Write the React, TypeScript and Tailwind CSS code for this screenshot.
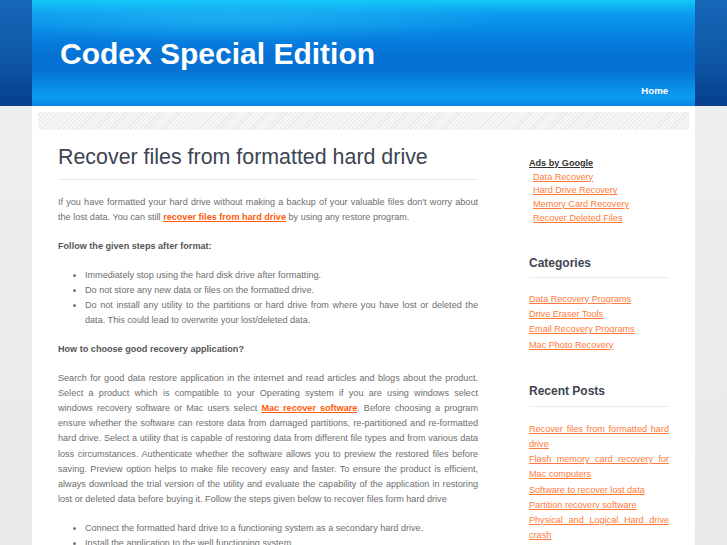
import React from "react";

const sideLink = "text-[#ff7a3a] underline decoration-[#ff7a3a]";
const jl = "block whitespace-nowrap [text-align-last:justify]";
const ll = "block whitespace-nowrap";
const bodyLink = "font-bold text-[#ff5a0a] underline";

export default function App() {
  return (
    <div className="min-h-[545px] w-full bg-[linear-gradient(180deg,#1767b8_0px,#0e56a7_60px,#063f8d_106px,#eeeeee_106px,#e9e9e9_545px)] font-['Liberation_Sans',Arial,sans-serif]">
      <div className="mx-auto w-[663px] bg-white">
        {/* Header */}
        <div className="relative flex h-[106px] flex-col bg-[linear-gradient(180deg,#14c8f7_0px,#0b9bee_14px,#0784e2_34px,#0672d4_55px,#0672d3_70px,#0a8ae6_86px,#0b9cf0_98px,#0a84e2_106px)]">
          <div className="pointer-events-none absolute inset-0 bg-[radial-gradient(ellipse_60%_30%_at_30%_18%,rgba(60,220,255,0.35),rgba(60,220,255,0)_70%)]" />
          <h1 className="relative pl-[28px] pt-[39px] text-[30px] font-bold leading-[30px] text-white">
            Codex Special Edition
          </h1>
          <div className="relative mt-auto flex justify-end pb-[9px] pr-[27px]">
            <span className="text-[9.6px] font-bold leading-[12px] text-white">Home</span>
          </div>
        </div>

        {/* Body */}
        <div className="px-[6px] pt-[6px]">
          <div className="h-[18px] bg-[repeating-linear-gradient(135deg,#f7f7f7_0px,#f7f7f7_2px,#e9e9e9_2px,#e9e9e9_3px)]" />
        </div>
        <div className="flex px-[26px] text-[9.1px] leading-[15.2px] text-[#6e6e6e]">
          {/* Main */}
          <div className="w-[420px] pt-[13px]">
            <h2 className="border-b border-[#ececec] pb-[8px] text-[21.4px] leading-[28px] text-[#3c4452]">
              Recover files from formatted hard drive
            </h2>
            <div className="pt-[15px]">
              <p className="mb-[13.5px]">
                <span className={jl}>If you have formatted your hard drive without making a backup of your valuable files don't worry about</span>
                <span className={ll}>
                  the lost data. You can still <a className={bodyLink}>recover files from hard drive</a> by using any restore program.
                </span>
              </p>
              <p className="mb-[13.5px] font-bold text-[#555]">Follow the given steps after format:</p>
              <ul className="mb-[13.5px] list-disc pl-[27px] marker:text-[#777]">
                <li>Immediately stop using the hard disk drive after formatting.</li>
                <li>Do not store any new data or files on the formatted drive.</li>
                <li>
                  <span className={jl}>Do not install any utility to the partitions or hard drive from where you have lost or deleted the</span>
                  <span className={ll}>data. This could lead to overwrite your lost/deleted data.</span>
                </li>
              </ul>
              <p className="mb-[13.5px] font-bold text-[#555]">How to choose good recovery application?</p>
              <p className="mb-[13.5px]">
                <span className={jl}>Search for good data restore application in the internet and read articles and blogs about the product.</span>
                <span className={jl}>Select a product which is compatible to your Operating system if you are using windows select</span>
                <span className={jl}>
                  windows recovery software or Mac users select <a className={bodyLink}>Mac recover software</a>. Before choosing a program
                </span>
                <span className={jl}>ensure whether the software can restore data from damaged partitions, re-partitioned and re-formatted</span>
                <span className={jl}>hard drive. Select a utility that is capable of restoring data from different file types and from various data</span>
                <span className={jl}>loss circumstances. Authenticate whether the software allows you to preview the restored files before</span>
                <span className={jl}>saving. Preview option helps to make file recovery easy and faster. To ensure the product is efficient,</span>
                <span className={jl}>always download the trial version of the utility and evaluate the capability of the application in restoring</span>
                <span className={ll}>lost or deleted data before buying it. Follow the steps given below to recover files form hard drive</span>
              </p>
              <ul className="list-disc pl-[27px] marker:text-[#777]">
                <li>Connect the formatted hard drive to a functioning system as a secondary hard drive.</li>
                <li>Install the application to the well functioning system</li>
              </ul>
            </div>
          </div>

          {/* Sidebar */}
          <div className="ml-[51px] w-[140px] pt-[27px]">
            <div className="leading-[13.7px]">
              <div className="font-bold text-[#333] underline">Ads by Google</div>
              <div className="flex flex-col items-start pl-[4px]">
                <a className={sideLink}>Data Recovery</a>
                <a className={sideLink}>Hard Drive Recovery</a>
                <a className={sideLink}>Memory Card Recovery</a>
                <a className={sideLink}>Recover Deleted Files</a>
              </div>
            </div>

            <h3 className="mt-[29px] border-b border-[#ececec] pb-[6px] text-[12px] font-bold leading-[16px] text-[#3f4552]">
              Categories
            </h3>
            <div className="mt-[14px] flex flex-col items-start leading-[15.4px]">
              <a className={sideLink}>Data Recovery Programs</a>
              <a className={sideLink}>Drive Eraser Tools</a>
              <a className={sideLink}>Email Recovery Programs</a>
              <a className={sideLink}>Mac Photo Recovery</a>
            </div>

            <h3 className="mt-[30px] border-b border-[#ececec] pb-[7px] text-[12px] font-bold leading-[16px] text-[#3f4552]">
              Recent Posts
            </h3>
            <div className="mt-[15px] flex flex-col text-justify leading-[15.1px]">
              <a className={sideLink}>Recover files from formatted hard drive</a>
              <a className={sideLink}>Flash memory card recovery for Mac computers</a>
              <a className={sideLink}>Software to recover lost data</a>
              <a className={sideLink}>Partition recovery software</a>
              <a className={sideLink}>Physical and Logical Hard drive crash</a>
            </div>
          </div>
        </div>
      </div>
    </div>
  );
}
